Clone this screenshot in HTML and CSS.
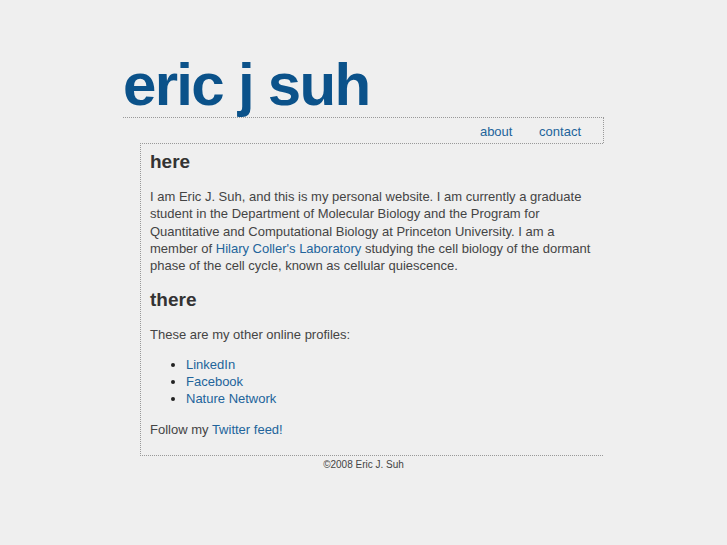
FILE: index.html
```html
<!DOCTYPE html>
<html>
	<head>
		<meta charset="UTF-8">
		<title>eric j suh</title>
		<link rel="stylesheet" href="styles.css">
	</head>
	<body>
		<div id="page">
			<div id="header">
				<h1><a href="#">eric j suh</a></h1>
			</div>
			<div id="nav">
				<a href="#">about</a>
				<a href="#">contact</a>
			</div>
			<div id="content">
				<h2>here</h2>
				<p>I am Eric J. Suh, and this is my personal website. I am currently a graduate student in the Department of Molecular Biology and the Program for Quantitative and Computational Biology at Princeton University. I am a member of <a href="#">Hilary Coller's Laboratory</a> studying the cell biology of the dormant phase of the cell cycle, known as cellular quiescence.</p>
				<h2>there</h2>
				<p>These are my other online profiles:</p>
				<ul>
					<li><a href="#">LinkedIn</a></li>
					<li><a href="#">Facebook</a></li>
					<li><a href="#">Nature Network</a></li>
				</ul>
				<p>Follow my <a href="#">Twitter feed!</a></p>
			</div>
			<div id="footer">&copy;2008 Eric J. Suh</div>
		</div>
	</body>
</html>
```
FILE: styles.css
```css
* {
	margin: 0;
	padding: 0;
}
body {
	background-color: #efefef;
	color: #444;
	font-family: "Liberation Sans", Arial, sans-serif;
	font-size: 13px;
	line-height: 17.3px;
}
a {
	color: #22649b;
	text-decoration: none;
}
#page {
	width: 481px;
	margin: 0 auto;
}
#header {
	padding-top: 53px;
	border-bottom: 1px dotted #999;
}
#header h1 {
	font-size: 60px;
	line-height: 64px;
	letter-spacing: -1.7px;
	font-weight: bold;
}
#header h1 a {
	color: #0b528a;
}
#nav {
	height: 25px;
	line-height: 27px;
	text-align: right;
	padding-right: 22px;
	border-right: 1px dotted #999;
}
#nav a {
	margin-left: 23px;
}
#content {
	margin-left: 17px;
	margin-right: 1px;
	padding: 6px 9px 3px 9px;
	border-top: 1px dotted #999;
	border-left: 1px dotted #999;
	border-bottom: 1px dotted #999;
}
#content h2 {
	font-size: 19px;
	line-height: 24px;
	color: #333;
	margin-bottom: 14px;
}
#content p {
	margin-bottom: 14px;
}
#content ul {
	margin: -2px 0 13px 36px;
}
#content li {
	line-height: 17.3px;
}
#content li::marker {
	color: #222;
}
#footer {
	text-align: center;
	font-size: 10px;
	line-height: 16px;
	padding-top: 1px;
	color: #444;
}
```
